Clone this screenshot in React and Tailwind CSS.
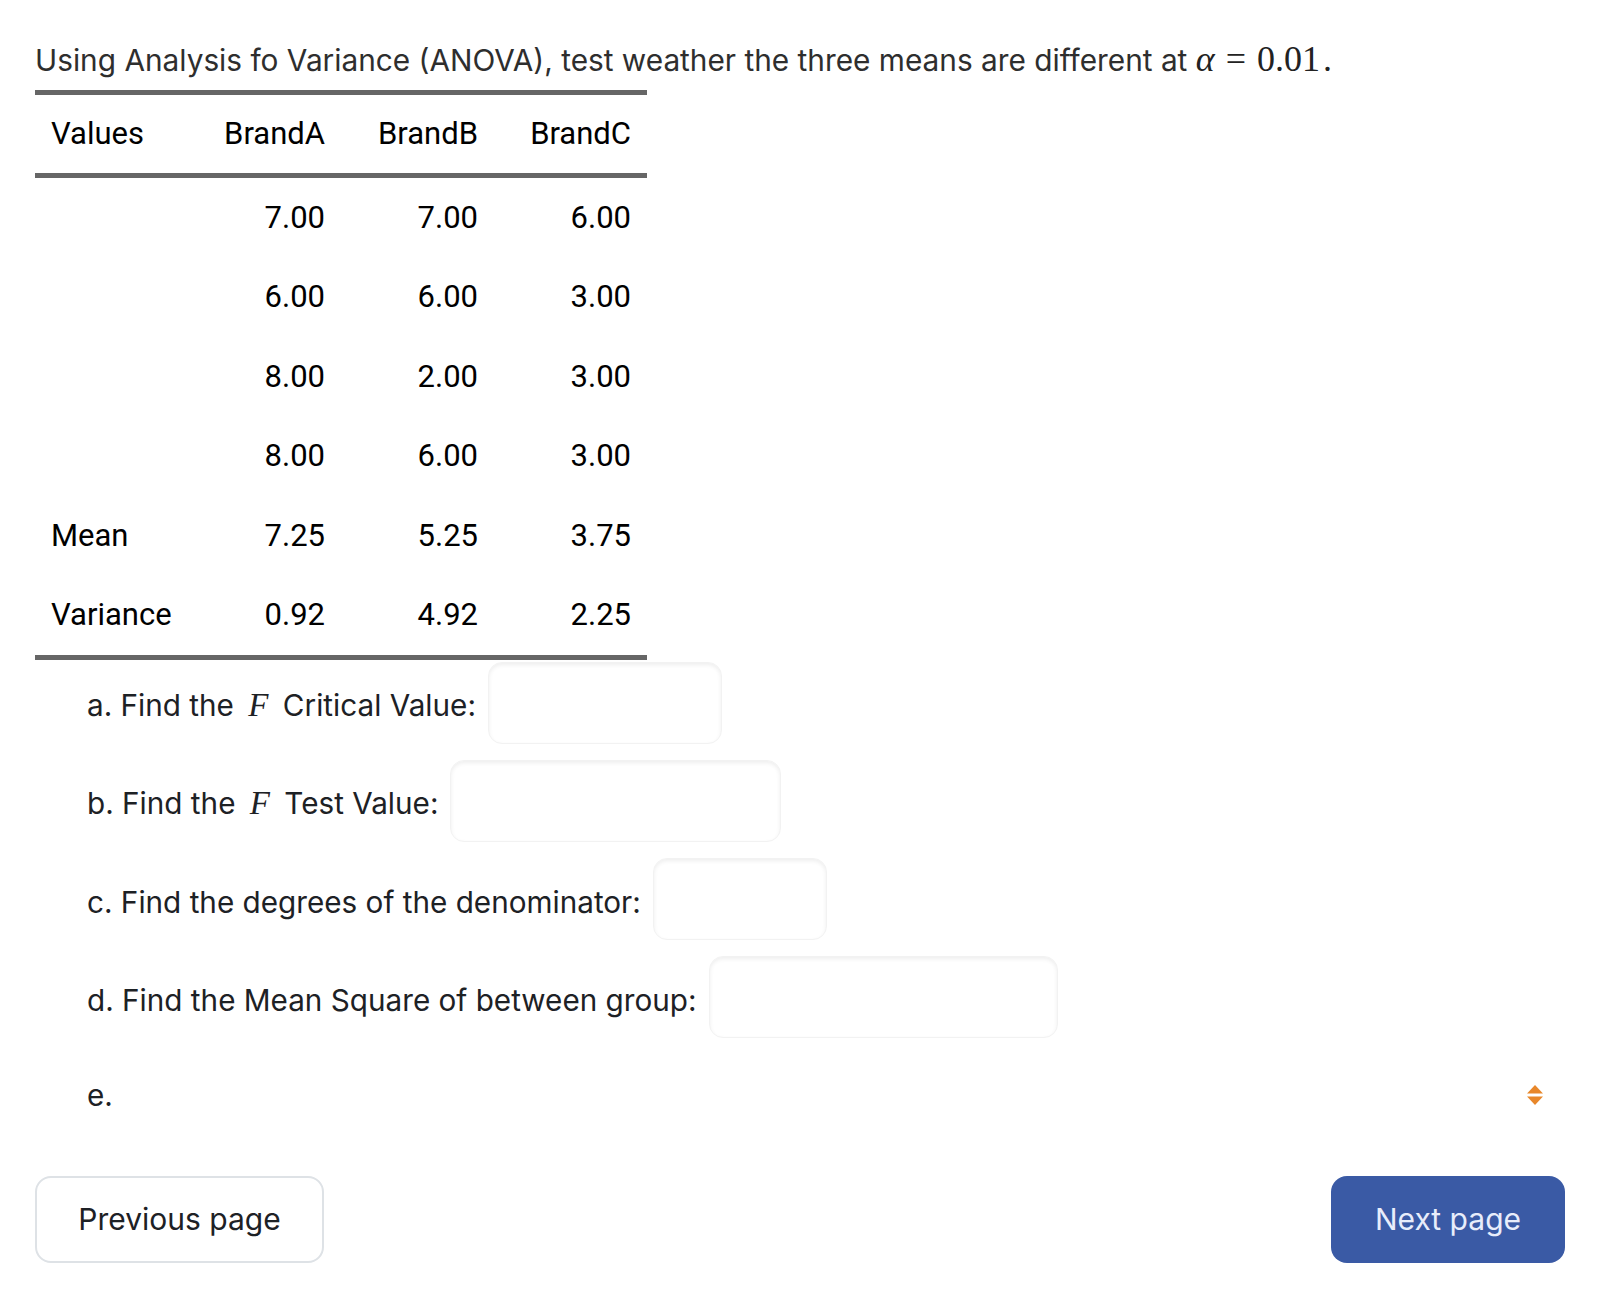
export default function App() {
  const rows = [
    ["", "7.00", "7.00", "6.00"],
    ["", "6.00", "6.00", "3.00"],
    ["", "8.00", "2.00", "3.00"],
    ["", "8.00", "6.00", "3.00"],
    ["Mean", "7.25", "5.25", "3.75"],
    ["Variance", "0.92", "4.92", "2.25"],
  ];
  const items = [
    { label: "a. Find the ", f: true, rest: " Critical Value:", w: "w-[234px]" },
    { label: "b. Find the ", f: true, rest: " Test Value:", w: "w-[331px]" },
    { label: "c. Find the degrees of the denominator:", f: false, rest: "", w: "w-[174px]" },
    { label: "d. Find the Mean Square of between group:", f: false, rest: "", w: "w-[349px]" },
  ];
  return (
    <div className="min-h-[1308px] bg-white px-[35px] pt-[39px] font-[Inter,sans-serif] text-[#1d2125]">
      <p className="text-[29.8px] leading-[40px] text-[#2e2e2e] mb-[10px] whitespace-nowrap">
        Using Analysis fo Variance (ANOVA), test weather the three means are different at{" "}
        <span className="font-['Liberation_Serif',serif] text-[36px] text-[#222]">
          <i>α</i>
          <span className="mx-[11px]">=</span>
          0.01
        </span>
        <span className="font-['Liberation_Serif',serif] text-[36px] text-[#222] ml-[3px]">.</span>
      </p>

      <div className="w-[612px] border-t-[5px] border-b-[5px] border-[#666666] font-[Roboto,sans-serif] text-[31px] text-black">
        <div className="grid grid-cols-4 h-[83px] items-center border-b-[5px] border-[#666666]">
          <div className="pl-4">Values</div>
          <div className="pr-4 text-right">BrandA</div>
          <div className="pr-4 text-right">BrandB</div>
          <div className="pr-4 text-right">BrandC</div>
        </div>
        {rows.map((r, i) => (
          <div key={i} className="grid grid-cols-4 h-[79.5px] items-center">
            <div className="pl-4">{r[0]}</div>
            <div className="pr-4 text-right">{r[1]}</div>
            <div className="pr-4 text-right">{r[2]}</div>
            <div className="pr-4 text-right">{r[3]}</div>
          </div>
        ))}
      </div>

      <div className="ml-[52px] pt-[2px] text-[29.7px] text-[#1d2125]">
        {items.map((it, i) => (
          <div key={i} className="flex items-center gap-[12px] mb-4">
            <span className="whitespace-nowrap translate-y-[3px]">
              {it.label}
              {it.f && <i className="font-['Liberation_Serif',serif] text-[33px] px-[6px]">F</i>}
              {it.rest}
            </span>
            <input
              type="text"
              className={`${it.w} h-[82px] rounded-[14px] border border-[#f2f2f2] bg-white shadow-[inset_0_2px_4px_rgba(0,0,0,0.07)] outline-none`}
            />
          </div>
        ))}
        <div className="flex h-[82px] items-center">
          <span>e.</span>
          <div className="flex-1 flex justify-end pr-[21px]">
            <svg width="18" height="22" viewBox="0 0 18 22">
              <polygon points="9,1 17,9.5 1,9.5" fill="#e8872a" />
              <polygon points="1,12.5 17,12.5 9,21" fill="#e8872a" />
            </svg>
          </div>
        </div>
      </div>

      <div className="mt-[40px] flex justify-between">
        <button className="h-[87px] w-[289px] rounded-[16px] border-2 border-[#dee2e6] bg-white text-[30px] text-[#1d2125]">
          Previous page
        </button>
        <button className="h-[87px] w-[234px] rounded-[16px] bg-[#3a5aa5] text-[30px] text-[#e8edfb]">
          Next page
        </button>
      </div>
    </div>
  );
}
